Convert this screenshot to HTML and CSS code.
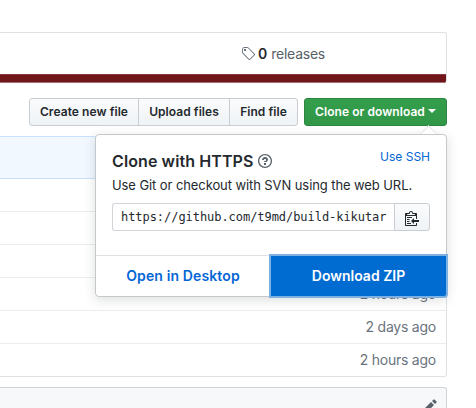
FILE: index.html
```html
<!DOCTYPE html>
<html lang="en">
<head>
<meta charset="utf-8">
<title>Repository</title>
<link rel="stylesheet" href="styles.css">
</head>
<body>
<main class="page">
  <section class="summary">
    <a class="releases"><svg class="tag" width="14" height="16" viewBox="0 0 14 16"><path fill-rule="evenodd" d="M7.685 1.72a2.49 2.49 0 0 0-1.76-.726H3.48A2.5 2.5 0 0 0 .994 3.48v2.456c0 .656.269 1.292.726 1.76l6.024 6.024a.99.99 0 0 0 1.402 0l4.563-4.563a.99.99 0 0 0 0-1.402L7.685 1.72zM2.366 7.048a1.54 1.54 0 0 1-.467-1.123V3.48c0-.874.716-1.58 1.58-1.58h2.456c.418 0 .825.159 1.123.467l6.104 6.094-4.702 4.702-6.094-6.114zm.626-4.066h1.989v1.989H2.982V2.982z"/></svg><b>0</b><span>releases</span></a>
    <div class="language-bar"></div>
  </section>
  <nav class="actions">
    <div class="group"><button class="btn create">Create new file</button><button class="btn upload">Upload files</button><button class="btn find">Find file</button></div>
    <div class="clone">
      <button class="btn primary">Clone or download<i class="caret"></i></button>
      <div class="popover">
        <div class="popover-body">
          <div class="heading"><h4>Clone with HTTPS</h4><svg class="help" width="14" height="16" viewBox="0 0 14 16"><path fill-rule="evenodd" d="M6 10h2v2H6v-2zm4-3.5C10 8.64 8 9 8 9H6c0-.55.45-1 1-1h.5c.28 0 .5-.22.5-.5v-1c0-.28-.22-.5-.5-.5h-1c-.28 0-.5.22-.5.5V7H4c0-1.5 1.5-3 3-3s3 1 3 2.5zM7 2.3c3.14 0 5.7 2.56 5.7 5.7s-2.56 5.7-5.7 5.7A5.71 5.71 0 0 1 1.3 8c0-3.14 2.56-5.7 5.7-5.7zM7 1C3.14 1 0 4.14 0 8s3.14 7 7 7 7-3.14 7-7-3.14-7-7-7z"/></svg><a class="ssh">Use SSH</a></div>
          <p class="hint">Use Git or checkout with SVN using the web URL.</p>
          <div class="url-field"><span class="url">https://github.com/t9md/build-kikutar</span><button class="copy"><svg width="14" height="16" viewBox="0 0 14 16"><path fill-rule="evenodd" d="M2 13h4v1H2v-1zm5-6H2v1h5V7zm2 3V8l-3 3 3 3v-2h5v-2H9zM4.5 9H2v1h2.5V9zM2 12h2.5v-1H2v1zm9 1h1v2c-.02.28-.11.52-.3.7-.19.18-.42.28-.7.3H1c-.55 0-1-.45-1-1V4c0-.55.45-1 1-1h3c0-1.11.89-2 2-2 1.11 0 2 .89 2 2h3c.55 0 1 .45 1 1v5h-1V6H1v9h10v-2zM2 5h8c0-.55-.45-1-1-1H8c-.55 0-1-.45-1-1s-.45-1-1-1-1 .45-1 1-.45 1-1 1H3c-.55 0-1 .45-1 1z"/></svg></button></div>
        </div>
        <div class="popover-footer"><a class="desktop"><span>Open in Desktop</span></a><a class="zip"><span>Download ZIP</span></a></div>
      </div>
    </div>
  </nav>
  <section class="files">
    <div class="commit"></div>
    <div class="row"></div>
    <div class="row"></div>
    <div class="row"></div>
    <div class="row"><span>2 hours ago</span></div>
    <div class="row"><span>2 days ago</span></div>
    <div class="row"><span>2 hours ago</span></div>
  </section>
  <section class="readme"><svg width="14" height="16" viewBox="0 0 14 16"><path fill-rule="evenodd" d="M0 12v3h3l8-8-3-3-8 8zm3 2H1v-2h1v1h1v1zm10.3-9.3L12 6 9 3l1.3-1.3a.996.996 0 0 1 1.41 0l1.59 1.59c.39.39.39 1.02 0 1.41z"/></svg></section>
</main>
</body>
</html>
```

FILE: styles.css
```css
* { box-sizing: border-box; }
body { margin: 0; background: #fff; color: #24292e; font-family: Inter, "Liberation Sans", sans-serif; font-size: 14px; }
svg { fill: currentColor; flex: none; }
button { font: inherit; color: inherit; }
.page { width: 476px; height: 408px; padding: 32px 29px 0 0; overflow: hidden; }

.summary { height: 51px; border: 1px solid #dfe2e5; border-left: 0; border-bottom: 0; border-radius: 0 3px 3px 0; overflow: hidden; display: flex; flex-direction: column; }
.releases { flex: 1; display: flex; align-items: center; padding: 0 0 0 241px; color: #586069; }
.releases b { color: #24292e; font-weight: 600; margin: 0 4px 0 3px; }
.releases span { letter-spacing: -.25px; }
.tag { color: #6a737d; }
.language-bar { height: 9px; margin-right: -1px; background: #701519; border-top: 1px solid #8a3a3e; border-bottom: 1px solid #a17074; }

.actions { display: flex; justify-content: space-between; padding: 15px 0 0 29px; height: 53px; }
.group { display: flex; }
.btn { height: 28px; padding: 0; border: 1px solid #c9cdd1; background: linear-gradient(#fafbfc, #eff3f6); font-size: 12px; font-weight: 600; line-height: 20px; letter-spacing: .06px; white-space: nowrap; }
.create { width: 110px; border-radius: 3px 0 0 3px; }
.upload { width: 92px; margin-left: -1px; }
.find { width: 69px; margin-left: -1px; border-radius: 0 3px 3px 0; }
.clone { position: relative; }
.primary { width: 143px; display: flex; align-items: center; justify-content: center; border-color: #2b8440; border-radius: 3px; background: linear-gradient(#349e4c, #309747); color: #fff; }
.caret { border: 4px solid transparent; border-top-color: #fff; border-bottom: 0; margin: -2px 0 0 3px; }

.popover { position: absolute; z-index: 2; top: 36px; right: 0; width: 352px; height: 163px; border: 1px solid #c5c8cb; border-radius: 4px; background: #fff; box-shadow: 0 3px 12px rgba(27, 31, 35, .15); display: flex; flex-direction: column; }
.popover::before { content: ""; position: absolute; top: -7px; right: 11px; width: 12px; height: 12px; background: #fff; border: 1px solid #e3e5e7; border-right: 0; border-bottom: 0; transform: rotate(45deg); clip-path: polygon(-1px -1px, 100% -1px, -1px 100%); }
.popover-body { flex: 1; padding: 14px 16px 0; }
.heading { display: flex; height: 24px; align-items: center; }
h4 { margin: 0; font-size: 16px; font-weight: 600; line-height: 22px; letter-spacing: .1px; white-space: nowrap; }
.help { margin-left: 4px; color: #586069; }
.ssh { margin: -10px 0 0 auto; color: #0366d6; font-size: 12px; white-space: nowrap; }
.hint { margin: 2px 0 8px; font-size: 13px; line-height: 20px; letter-spacing: -.09px; white-space: nowrap; }
.url-field { display: flex; height: 28px; }
.url { flex: 1; border: 1px solid #d1d5da; border-right: 0; border-radius: 3px 0 0 3px; padding: 0 0 0 8px; font: 12px/26px "DejaVu Sans Mono", monospace; letter-spacing: -.05px; }
.copy { width: 36px; padding: 1px 0 0; display: flex; align-items: center; justify-content: center; border: 1px solid #c9cdd1; border-radius: 0 3px 3px 0; background: linear-gradient(#fafbfc, #eff3f6); }
.popover-footer { display: flex; height: 41px; border-top: 1px solid #dfe2e5; font-weight: 600; line-height: 40px; text-align: center; }
.desktop { flex: 1; color: #0366d6; letter-spacing: .12px; padding-right: 1px; }
.zip { width: 175px; color: #fff; background: #006bd1; box-shadow: 0 0 0 2px #7eb1e1; border-radius: 0 0 2px; }

.files { border: 1px solid #dfe2e5; border-left: 0; border-radius: 0 3px 3px 0; height: 241px; }
.commit { height: 43px; margin: -1px -1px 0 0; background: #f1f8ff; border: 1px solid #c8e1ff; border-left: 0; border-radius: 0 3px 0 0; }
.row { height: 33px; display: flex; align-items: center; justify-content: flex-end; padding: 0 10px 2px 0; border-bottom: 1px solid #eaecef; color: #6a737d; letter-spacing: -.23px; }
.row:last-child { border-bottom: 0; }
.readme { margin-top: 10px; height: 21px; display: flex; justify-content: flex-end; padding: 10px 9px 0; border: 1px solid #d1d5da; border-left: 0; border-bottom: 0; border-radius: 0 3px 0 0; background: #f6f8fa; color: #586069; overflow: hidden; }
```
